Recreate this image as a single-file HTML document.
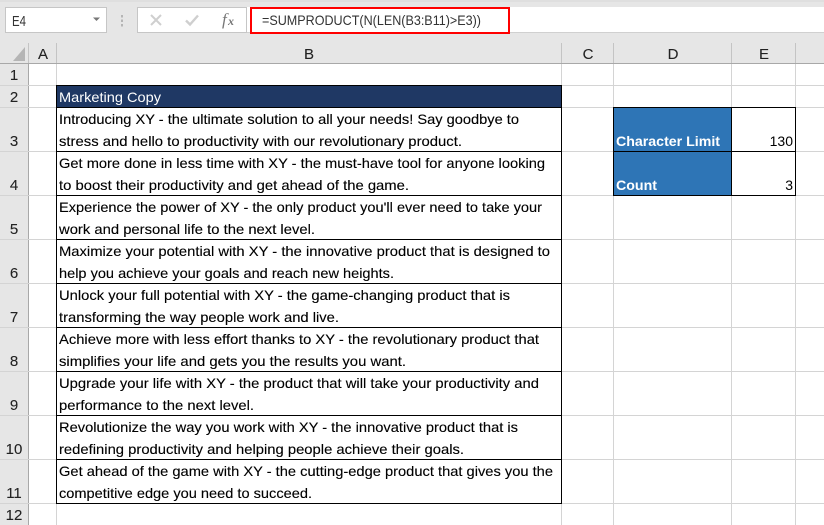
<!DOCTYPE html>
<html><head><meta charset="utf-8"><style>
html,body{margin:0;padding:0;width:824px;height:525px;overflow:hidden;background:#fff}
svg{display:block}
text{font-family:"Liberation Sans",sans-serif;font-size:14px;fill:#000}
.h{fill:#222;font-size:15px;text-anchor:middle;stroke:#222;stroke-width:.1}
.b text{stroke:#000;stroke-width:.12}
.w{fill:#fff;font-weight:bold}
</style></head><body>
<svg width="824" height="525" viewBox="0 0 824 525" xmlns="http://www.w3.org/2000/svg">
<rect width="824" height="525" fill="#fff"/>
<!-- toolbar -->
<rect width="824" height="64" fill="#e6e6e6"/>
<rect x="0" y="0" width="824" height="2" fill="#dfdfdf"/>
<rect x="5.500" y="7.500" width="101" height="25" fill="#fff" stroke="#c6c6c6"/>
<text x="12" y="26" style="font-size:15px;fill:#333" textLength="14" lengthAdjust="spacingAndGlyphs">E4</text>
<path d="M93 17.500h7l-3.500 3.500z" fill="#777"/>
<rect x="121" y="15" width="2" height="2.500" fill="#b5b5b5"/><rect x="121" y="19.500" width="2" height="2.500" fill="#b5b5b5"/><rect x="121" y="24" width="2" height="2.500" fill="#b5b5b5"/>
<rect x="137.500" y="7.500" width="109" height="25" fill="#fff" stroke="#c6c6c6"/>
<rect x="247" y="7" width="577" height="26" fill="#fff"/>
<line x1="247" y1="32.500" x2="824" y2="32.500" stroke="#d0d0d0"/>
<path d="M151 15l10 10M161 15l-10 10" stroke="#cfcfcf" stroke-width="2" fill="none"/>
<path d="M186 20.500l4 4 8-9" stroke="#cfcfcf" stroke-width="2.400" fill="none"/>
<text x="222" y="25" style="font-family:'Liberation Serif',serif;font-style:italic;font-size:17px;fill:#777">f</text>
<text x="228" y="25" style="font-family:'Liberation Serif',serif;font-style:italic;font-weight:bold;font-size:12px;fill:#777">x</text>
<rect x="251" y="8" width="258" height="25" fill="#fff" stroke="#f00" stroke-width="2"/>
<text x="262" y="25" style="font-size:14px;fill:#333" textLength="219" lengthAdjust="spacingAndGlyphs">=SUMPRODUCT(N(LEN(B3:B11)&gt;E3))</text>
<!-- corner -->
<path d="M25 47v14H13z" fill="#b5b5b5"/>
<!-- col header separators -->
<g stroke="#c4c4c4">
<line x1="28.500" y1="43" x2="28.500" y2="63"/><line x1="56.500" y1="43" x2="56.500" y2="63"/>
<line x1="561.500" y1="43" x2="561.500" y2="63"/><line x1="613.500" y1="43" x2="613.500" y2="63"/>
<line x1="731.500" y1="43" x2="731.500" y2="63"/><line x1="795.500" y1="43" x2="795.500" y2="63"/>
</g>
<line x1="0" y1="63.500" x2="824" y2="63.500" stroke="#a8a8a8"/>
<text class="h" x="43" y="59">A</text><text class="h" x="309" y="59">B</text><text class="h" x="588" y="59">C</text><text class="h" x="673" y="59">D</text><text class="h" x="764" y="59">E</text>
<!-- row header -->
<rect x="0" y="64" width="28" height="461" fill="#e6e6e6"/>
<line x1="28.500" y1="63" x2="28.500" y2="525" stroke="#a8a8a8"/>
<!-- grid -->
<g stroke="#d4d4d4">
<line x1="56.500" y1="64" x2="56.500" y2="525"/><line x1="561.500" y1="64" x2="561.500" y2="525"/><line x1="613.500" y1="64" x2="613.500" y2="525"/><line x1="731.500" y1="64" x2="731.500" y2="525"/><line x1="795.500" y1="64" x2="795.500" y2="525"/>
<line x1="0" y1="85.500" x2="824" y2="85.500"/><line x1="0" y1="107.500" x2="824" y2="107.500"/><line x1="0" y1="151.500" x2="824" y2="151.500"/><line x1="0" y1="195.500" x2="824" y2="195.500"/><line x1="0" y1="239.500" x2="824" y2="239.500"/><line x1="0" y1="283.500" x2="824" y2="283.500"/><line x1="0" y1="327.500" x2="824" y2="327.500"/><line x1="0" y1="371.500" x2="824" y2="371.500"/><line x1="0" y1="415.500" x2="824" y2="415.500"/><line x1="0" y1="459.500" x2="824" y2="459.500"/><line x1="0" y1="503.500" x2="824" y2="503.500"/>
</g>
<g>
<text class="h" x="14" y="80">1</text><text class="h" x="14" y="102">2</text><text class="h" x="14" y="146">3</text><text class="h" x="14" y="190">4</text><text class="h" x="14" y="234">5</text><text class="h" x="14" y="278">6</text><text class="h" x="14" y="322">7</text><text class="h" x="14" y="366">8</text><text class="h" x="14" y="410">9</text><text class="h" x="14" y="454">10</text><text class="h" x="14" y="498">11</text><text class="h" x="14" y="520">12</text>
</g>
<!-- B table -->
<rect x="57" y="86" width="505" height="22" fill="#1f3864"/>
<rect x="57" y="108" width="505" height="396" fill="#fff"/>
<g stroke="#000" fill="none">
<path d="M56.500 85.500H561.500V503.500H56.500Z"/>
<path d="M57 107.500H562M57 151.500H562M57 195.500H562M57 239.500H562M57 283.500H562M57 327.500H562M57 371.500H562M57 415.500H562M57 459.500H562"/>
</g>
<text x="59" y="102" style="fill:#fff" textLength="102" lengthAdjust="spacingAndGlyphs">Marketing Copy</text>
<g class="b">
<text x="59" y="124" textLength="460" lengthAdjust="spacingAndGlyphs">Introducing XY - the ultimate solution to all your needs! Say goodbye to</text>
<text x="59" y="146" textLength="403" lengthAdjust="spacingAndGlyphs">stress and hello to productivity with our revolutionary product.</text>
<text x="59" y="168" textLength="486" lengthAdjust="spacingAndGlyphs">Get more done in less time with XY - the must-have tool for anyone looking</text>
<text x="59" y="190" textLength="350" lengthAdjust="spacingAndGlyphs">to boost their productivity and get ahead of the game.</text>
<text x="59" y="212" textLength="483" lengthAdjust="spacingAndGlyphs">Experience the power of XY - the only product you'll ever need to take your</text>
<text x="59" y="234" textLength="256" lengthAdjust="spacingAndGlyphs">work and personal life to the next level.</text>
<text x="59" y="256" textLength="491" lengthAdjust="spacingAndGlyphs">Maximize your potential with XY - the innovative product that is designed to</text>
<text x="59" y="278" textLength="335" lengthAdjust="spacingAndGlyphs">help you achieve your goals and reach new heights.</text>
<text x="59" y="300" textLength="451" lengthAdjust="spacingAndGlyphs">Unlock your full potential with XY - the game-changing product that is</text>
<text x="59" y="322" textLength="280" lengthAdjust="spacingAndGlyphs">transforming the way people work and live.</text>
<text x="59" y="344" textLength="480" lengthAdjust="spacingAndGlyphs">Achieve more with less effort thanks to XY - the revolutionary product that</text>
<text x="59" y="366" textLength="347" lengthAdjust="spacingAndGlyphs">simplifies your life and gets you the results you want.</text>
<text x="59" y="388" textLength="480" lengthAdjust="spacingAndGlyphs">Upgrade your life with XY - the product that will take your productivity and</text>
<text x="59" y="410" textLength="195" lengthAdjust="spacingAndGlyphs">performance to the next level.</text>
<text x="59" y="432" textLength="459" lengthAdjust="spacingAndGlyphs">Revolutionize the way you work with XY - the innovative product that is</text>
<text x="59" y="454" textLength="405" lengthAdjust="spacingAndGlyphs">redefining productivity and helping people achieve their goals.</text>
<text x="59" y="476" textLength="494" lengthAdjust="spacingAndGlyphs">Get ahead of the game with XY - the cutting-edge product that gives you the</text>
<text x="59" y="498" textLength="253" lengthAdjust="spacingAndGlyphs">competitive edge you need to succeed.</text>
</g>
<!-- D/E table -->
<rect x="614" y="108" width="118" height="88" fill="#2e75b6"/>
<rect x="732" y="108" width="64" height="88" fill="#fff"/>
<path d="M613.500 107.500H795.500V195.500H613.500ZM613.500 151.500H795.500M731.500 107.500V195.500" stroke="#000" fill="none"/>
<text class="w" x="616" y="146" textLength="104" lengthAdjust="spacingAndGlyphs">Character Limit</text>
<text class="w" x="616" y="190" textLength="41" lengthAdjust="spacingAndGlyphs">Count</text>
<text x="793" y="146" text-anchor="end">130</text>
<text x="793" y="190" text-anchor="end">3</text>
</svg>
</body></html>
